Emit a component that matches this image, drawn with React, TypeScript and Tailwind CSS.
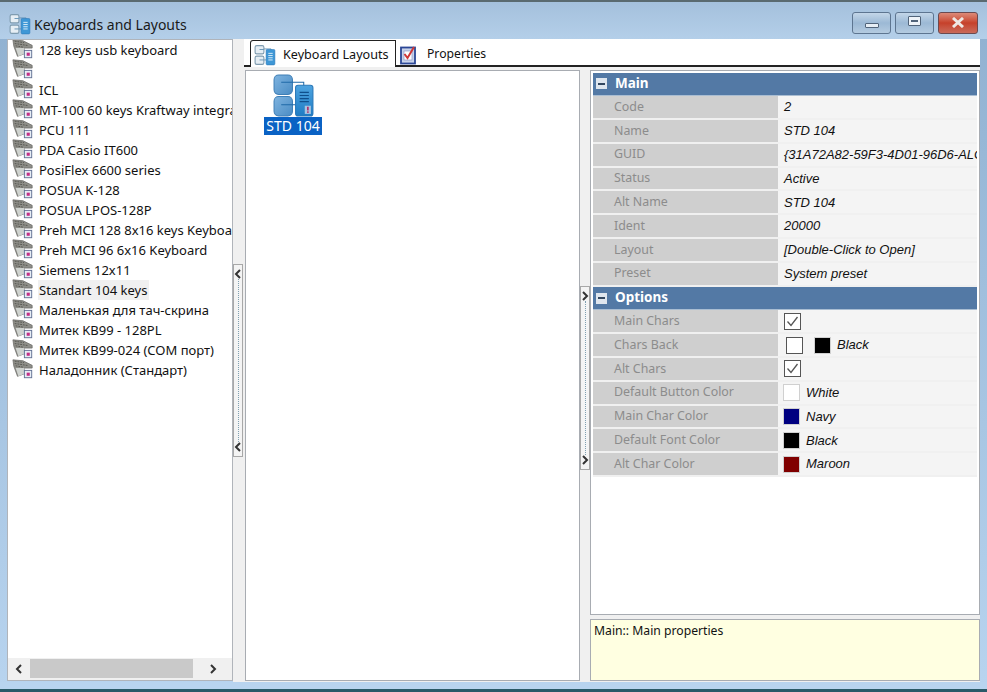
const font = "font-['Noto_Sans','Liberation_Sans',sans-serif]";

function KbIcon() {
  return (
    <svg width="22" height="22" viewBox="0 0 24 24" className="shrink-0 -mt-[2px]">
      <path d="M1 2 L12 3 L22 8 L22 11 L13 11 L14 17 L6 20 L2 9 Z" fill="#8e8e88" stroke="#6a6a66" strokeWidth="0.8" />
      <path d="M3 3.5 L13 5 M3 6 L17 8.2 M4 8.5 L12 10" stroke="#55554f" strokeWidth="1" strokeDasharray="2 1" />
      <path d="M4 11 L13 11 L14 17 L7 20 Z" fill="#cfd3cf" />
      <rect x="13.5" y="13.5" width="8" height="8" fill="#e8eef6" stroke="#5f6f92" />
      <rect x="16" y="16" width="3.4" height="3.4" fill="#c42c84" />
    </svg>
  );
}

function LayoutIcon({ size }: { size: number }) {
  return (
    <svg width={size} height={size} viewBox="0 0 40 42" className="shrink-0">
      <defs>
        <linearGradient id="boxg" x1="0" y1="0" x2="1" y2="1">
          <stop offset="0" stopColor="#7fb4e0" />
          <stop offset="1" stopColor="#4a8cc4" />
        </linearGradient>
        <linearGradient id="srvg" x1="0" y1="0" x2="0" y2="1">
          <stop offset="0" stopColor="#4ea4e0" />
          <stop offset="1" stopColor="#1f7cc4" />
        </linearGradient>
      </defs>
      <rect x="1" y="1" width="18" height="19" rx="4.5" fill="url(#boxg)" stroke="#3f7fb6" />
      <rect x="1" y="22" width="18" height="19" rx="4.5" fill="url(#boxg)" stroke="#3f7fb6" />
      <path d="M8 8 H30 V12 M8 30 H22" stroke="#1f6aa8" strokeWidth="1" fill="none" />
      <rect x="22" y="11" width="17" height="30" rx="2.5" fill="url(#srvg)" stroke="#2a78b8" />
      <path d="M26 18 H35 M26 21 H35 M26 24 H35 M26 27 H35" stroke="#0f4f8c" strokeWidth="1.2" />
      <rect x="31" y="31" width="6" height="8" fill="#a8c4e0" />
      <rect x="33.3" y="32" width="1.5" height="3.6" fill="#b02060" />
      <rect x="33.3" y="36.5" width="1.5" height="1.4" fill="#b02060" />
    </svg>
  );
}

function SmallLayoutIcon() {
  return (
    <svg width="22" height="22" viewBox="0 0 40 40" className="shrink-0">
      <path d="M10 9 H31 V14 M10 29 H22" stroke="#5d8fb4" strokeWidth="1.6" fill="none" />
      <rect x="2" y="3" width="16" height="15" rx="3" fill="#e6eef4" stroke="#7f9cb0" strokeWidth="2" />
      <rect x="2" y="22" width="16" height="15" rx="3" fill="#e6eef4" stroke="#7f9cb0" strokeWidth="2" />
      <path d="M10 10 H18 M10 29 H18" stroke="#5d8fb4" strokeWidth="1.6" />
      <rect x="22" y="10" width="16" height="28" rx="2" fill="#3e97d6" stroke="#2a78b8" />
      <path d="M26 17 H34 M26 21 H34 M26 25 H34 M26 29 H34" stroke="#d8ecf8" strokeWidth="1.8" />
    </svg>
  );
}

function PropIcon() {
  return (
    <svg width="18" height="20" viewBox="0 0 18 20" className="shrink-0">
      <rect x="1" y="2.5" width="14" height="16" fill="#c9d3ea" stroke="#2b4796" strokeWidth="1.8" />
      <rect x="4" y="6" width="8" height="9" fill="#fff" stroke="#7d8bc0" strokeWidth="0.6" />
      <path d="M4.5 9 L7.5 13 L14 2" stroke="#d03838" strokeWidth="2" fill="none" />
    </svg>
  );
}

const keyboards = [
  "128 keys usb keyboard",
  "",
  "ICL",
  "MT-100 60 keys Kraftway integrated",
  "PCU 111",
  "PDA Casio IT600",
  "PosiFlex 6600 series",
  "POSUA K-128",
  "POSUA LPOS-128P",
  "Preh MCI 128 8x16 keys Keyboard",
  "Preh MCI 96 6x16 Keyboard",
  "Siemens 12x11",
  "Standart 104 keys",
  "Маленькая для тач-скрина",
  "Митек KB99 - 128PL",
  "Митек KB99-024 (COM порт)",
  "Наладонник (Стандарт)",
];

function Chevron({ dir }: { dir: "l" | "r" }) {
  return (
    <svg width="8" height="10" viewBox="0 0 8 10" className="shrink-0">
      <path d={dir === "l" ? "M6 1 L2 5 L6 9" : "M2 1 L6 5 L2 9"} stroke="#333" strokeWidth="2" fill="none" />
    </svg>
  );
}

function Splitter({ dir, mt, h }: { dir: "l" | "r"; mt: string; h: string }) {
  return (
    <div className={`flex flex-col items-center justify-between py-[4px] w-[10px] border border-[#a8a8a8] bg-[#f4f4f4] ${mt} ${h}`}>
      <Chevron dir={dir} />
      <div className="flex-1 border-l border-dotted border-[#7f9fb0]" />
      <Chevron dir={dir} />
    </div>
  );
}

function Header({ label }: { label: string }) {
  return (
    <div className="h-[23.8px] flex items-center bg-[#5379a5] border-b border-[#a9bdd2] pl-[3px] gap-[8px]">
      <span className="w-[11px] h-[11px] bg-[#dfe6ee] flex items-center justify-center">
        <span className="w-[7px] h-[2px] bg-[#33475f]" />
      </span>
      <span className="text-white text-[13.5px] font-bold leading-none">{label}</span>
    </div>
  );
}

function Row({ label, children }: { label: string; children: React.ReactNode }) {
  return (
    <div className="h-[23.8px] flex border-b-2 border-[#f0f0f0]">
      <div className="w-[185px] shrink-0 bg-[#cfcfcf] text-[#8c8c8c] text-[12.4px] pl-[21px] flex items-center whitespace-nowrap">{label}</div>
      <div className="flex-1 bg-[#f4f4f4] flex items-center pl-[6px] overflow-hidden whitespace-nowrap text-[13px] italic text-[#111] font-['Liberation_Sans',sans-serif]">{children}</div>
    </div>
  );
}

function Check({ checked }: { checked?: boolean }) {
  return (
    <span className="w-[17px] h-[17px] border border-[#555] bg-white flex items-center justify-center shrink-0">
      {checked && (
        <svg width="13" height="13" viewBox="0 0 13 13">
          <path d="M1.5 6.5 L5 10.5 L11.5 2" stroke="#555" strokeWidth="1.3" fill="none" />
        </svg>
      )}
    </span>
  );
}

function Swatch({ color, name }: { color: string; name: string }) {
  return (
    <span className="flex items-center gap-[6px] -ml-[1px]">
      <span className={`w-[17px] h-[17px] border border-[#d0d0d0] ${color}`} />
      {name}
    </span>
  );
}

function WinButton({ kind }: { kind: "min" | "max" | "close" }) {
  const base = "h-[22px] rounded-[3px] border flex items-center justify-center";
  if (kind === "close") {
    return (
      <div className={`${base} w-[40px] border-[#6b4a50] bg-gradient-to-b from-[#dc8a78] via-[#c6402a] to-[#c96a5a]`}>
        <svg width="14" height="11" viewBox="0 0 14 11">
          <path d="M2 1 L12 10 M12 1 L2 10" stroke="#eee8e4" strokeWidth="3" />
        </svg>
      </div>
    );
  }
  return (
    <div className={`${base} w-[39px] border-[#5d7590] bg-gradient-to-b from-[#c3d6e8] via-[#9cb9d5] to-[#b4cbe0]`}>
      {kind === "min" ? (
        <span className="w-[14px] h-[5px] mt-[5px] bg-[#e6eef5] border border-[#51647a] rounded-[1px]" />
      ) : (
        <span className="w-[13px] h-[10px] mb-[3px] bg-[#eef3f8] border border-[#51647a] rounded-[1px] flex items-center justify-center">
          <span className="w-[7px] h-[2px] bg-[#51647a]" />
        </span>
      )}
    </div>
  );
}

export default function App() {
  return (
    <div className={`w-[987px] h-[692px] overflow-hidden flex flex-col bg-gradient-to-b from-[#8fb0d0] to-[#b8d4ef] ${font} text-[#111]`}>
      <div className="h-[2px] bg-[#5a6a70] shrink-0" />
      {/* Title bar */}
      <div className="h-[36.5px] shrink-0 flex items-center pt-[8px] pl-[9px] pr-[9px] bg-gradient-to-b from-[#a4c0dc] to-[#b4cfe9]">
        <SmallLayoutIcon />
        <span className="ml-[3px] text-[14px] text-[#1a1a1a]">Keyboards and Layouts</span>
        <div className="ml-auto flex gap-[4px] mb-[3px]">
          <WinButton kind="min" />
          <WinButton kind="max" />
          <WinButton kind="close" />
        </div>
      </div>
      {/* Body */}
      <div className="flex-1 min-h-0 flex pl-[7px] pr-[7px]">
        {/* Left list */}
        <div className="w-[226px] shrink-0 flex flex-col mb-[1px] bg-white border border-[#b0b4ba]">
          <div className="flex-1 min-h-0 overflow-hidden">
            {keyboards.map((k, i) => (
              <div key={i} className="h-[20px] flex items-center pl-[4px] gap-[4px] whitespace-nowrap">
                <KbIcon />
                <span className={`text-[13px] leading-[20px] px-[1px] ${k === "Standart 104 keys" ? "bg-[#f0f0f0] pr-[2px]" : ""}`}>{k}</span>
              </div>
            ))}
          </div>
          <div className="h-[22px] shrink-0 flex items-stretch bg-[#f0f0f0] pt-[1px] pb-[2px]">
            <div className="w-[22px] flex items-center justify-center"><Chevron dir="l" /></div>
            <div className="w-[163px] bg-[#c9c9c9]" />
            <div className="flex-1 flex items-center justify-center"><Chevron dir="r" /></div>
          </div>
        </div>
        {/* Right region */}
        <div className="flex-1 min-w-0 flex flex-col bg-[#f0f0f0]">
          {/* Tabs */}
          <div className="h-[28px] shrink-0 ml-[11px] bg-white flex items-end pl-[6px] border-b-2 border-[#222]">
            <div className="w-[146px] h-[27px] flex items-center pl-[3px] pt-[3px] gap-[7px] border-t border-l border-r border-[#222] rounded-tl-[3px] bg-white -mb-[2px] whitespace-nowrap">
              <SmallLayoutIcon />
              <span className="text-[12.6px]">Keyboard Layouts</span>
            </div>
            <div className="h-[27px] -mb-[2px] flex items-center pl-[4px] pt-[3px] gap-[9px] whitespace-nowrap">
              <PropIcon />
              <span className="text-[12.2px]">Properties</span>
            </div>
          </div>
          <div className="flex-1 min-h-0 flex">
            <div className="w-[12px] shrink-0 flex">
              <Splitter dir="l" mt="mt-[197px]" h="h-[193px]" />
            </div>
            {/* Center */}
            <div className="w-[335px] shrink-0 mt-[3px] mb-[1px] bg-white border border-[#a8acb2] flex flex-col items-start">
              <div className="ml-[16px] mt-[3px] flex flex-col items-center w-[62px]">
                <LayoutIcon size={43} />
                <span className="px-[2px] bg-[#0a62c4] text-white text-[14px] leading-[18px] whitespace-nowrap">STD 104</span>
              </div>
            </div>
            <div className="w-[10px] shrink-0 flex">
              <Splitter dir="r" mt="mt-[219px]" h="h-[184px]" />
            </div>
            {/* Right */}
            <div className="flex-1 min-w-0 flex flex-col mt-[3px] mb-[1px] gap-[4px]">
              <div className="flex-1 min-h-0 bg-white border border-[#a8acb2] px-[2px] pt-[2px]">
                <Header label="Main" />
                <Row label="Code">2</Row>
                <Row label="Name">STD 104</Row>
                <Row label="GUID">{"{31A72A82-59F3-4D01-96D6-ALC"}</Row>
                <Row label="Status">Active</Row>
                <Row label="Alt Name">STD 104</Row>
                <Row label="Ident">20000</Row>
                <Row label="Layout">[Double-Click to Open]</Row>
                <Row label="Preset">System preset</Row>
                <Header label="Options" />
                <Row label="Main Chars"><Check checked /></Row>
                <Row label="Chars Back">
                  <span className="flex items-center gap-[12px] ml-[2px]">
                    <Check />
                    <Swatch color="bg-black" name="Black" />
                  </span>
                </Row>
                <Row label="Alt Chars"><Check checked /></Row>
                <Row label="Default Button Color"><Swatch color="bg-white" name="White" /></Row>
                <Row label="Main Char Color"><Swatch color="bg-[#000080]" name="Navy" /></Row>
                <Row label="Default Font Color"><Swatch color="bg-black" name="Black" /></Row>
                <Row label="Alt Char Color"><Swatch color="bg-[#800000]" name="Maroon" /></Row>
              </div>
              <div className="h-[62px] shrink-0 bg-[#ffffe1] border border-[#a8acb2] pl-[3px] pt-[1px] text-[12.2px] leading-[20px]">Main:: Main properties</div>
            </div>
          </div>
        </div>
      </div>
      {/* Bottom */}
      <div className="h-[7px] shrink-0 bg-[#b8d4ef]" />
      <div className="h-[3px] shrink-0 bg-[#2a5a68]" />
    </div>
  );
}
